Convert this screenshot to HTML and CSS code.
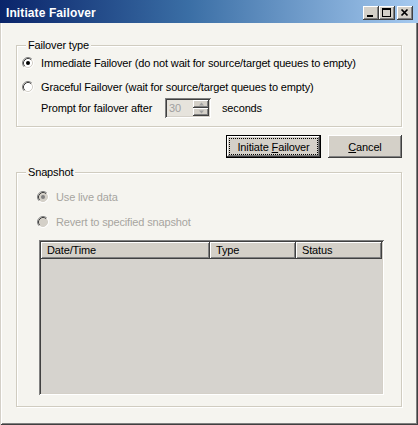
FILE: index.html
```html
<!DOCTYPE html>
<html>
<head>
<meta charset="utf-8">
<link rel="stylesheet" href="styles.css">
</head>
<body>
<div class="window">
  <div class="titlebar">
    <span class="title">Initiate Failover</span>
    <div class="tbtns">
      <span class="tbtn"><svg width="16" height="14" viewBox="0 0 16 14"><rect x="4" y="9" width="6" height="2" fill="#000"/></svg></span>
      <span class="tbtn"><svg width="16" height="14" viewBox="0 0 16 14"><rect x="3.5" y="2.5" width="8" height="8" fill="none" stroke="#000"/><rect x="3" y="2" width="9" height="2" fill="#000"/></svg></span>
      <span class="tbtn close"><svg width="16" height="14" viewBox="0 0 16 14"><path d="M4.5 3.5 L10.5 9.5 M10.5 3.5 L4.5 9.5" stroke="#000" stroke-width="1.7" fill="none"/></svg></span>
    </div>
  </div>
  <div class="client">
    <fieldset class="group g1">
      <legend>Failover type</legend>
      <div class="gbody">
        <div class="row r1">
          <svg class="radio" width="12" height="12" viewBox="0 0 12 12"><circle cx="6" cy="6" r="4.5" fill="#fff"/><path d="M2.11 9.89 A5.5 5.5 0 0 1 9.89 2.11" stroke="#808080" fill="none"/><path d="M9.89 2.11 A5.5 5.5 0 0 1 2.11 9.89" stroke="#fff" fill="none"/><path d="M2.82 9.18 A4.5 4.5 0 0 1 9.18 2.82" stroke="#404040" fill="none"/><path d="M9.18 2.82 A4.5 4.5 0 0 1 2.82 9.18" stroke="#d4d0c8" fill="none"/><circle cx="6" cy="6" r="2" fill="#000"/></svg>
          <span>Immediate Failover (do not wait for source/target queues to empty)</span>
        </div>
        <div class="row r2">
          <svg class="radio" width="12" height="12" viewBox="0 0 12 12"><circle cx="6" cy="6" r="4.5" fill="#fff"/><path d="M2.11 9.89 A5.5 5.5 0 0 1 9.89 2.11" stroke="#808080" fill="none"/><path d="M9.89 2.11 A5.5 5.5 0 0 1 2.11 9.89" stroke="#fff" fill="none"/><path d="M2.82 9.18 A4.5 4.5 0 0 1 9.18 2.82" stroke="#404040" fill="none"/><path d="M9.18 2.82 A4.5 4.5 0 0 1 2.82 9.18" stroke="#d4d0c8" fill="none"/></svg>
          <span>Graceful Failover (wait for source/target queues to empty)</span>
        </div>
        <div class="row prompt">
          <span class="plabel">Prompt for failover after</span>
          <div class="spin">
            <span class="spin-val">30</span>
            <span class="spin-btns">
              <span class="sb"><svg width="7" height="4" viewBox="0 0 7 4"><path d="M3.5 0.5 L6 3.5 L1 3.5 Z" fill="#a0a0a0"/></svg></span>
              <span class="sb"><svg width="7" height="4" viewBox="0 0 7 4"><path d="M1 0.5 L6 0.5 L3.5 3.5 Z" fill="#a0a0a0"/></svg></span>
            </span>
          </div>
          <span class="secs">seconds</span>
        </div>
      </div>
    </fieldset>

    <div class="buttons">
      <button class="btn default"><span class="focus"><span class="lbl">Initiate <u>F</u>ailover</span></span></button>
      <button class="btn cancel"><span class="focus nofocus"><span class="lbl"><u>C</u>ancel</span></span></button>
    </div>

    <fieldset class="group g2">
      <legend>Snapshot</legend>
      <div class="gbody gb2">
        <div class="row r1 disabled">
          <svg class="radio" width="12" height="12" viewBox="0 0 12 12"><circle cx="6" cy="6" r="4.5" fill="#d4d0c8"/><path d="M2.11 9.89 A5.5 5.5 0 0 1 9.89 2.11" stroke="#808080" fill="none"/><path d="M9.89 2.11 A5.5 5.5 0 0 1 2.11 9.89" stroke="#fff" fill="none"/><path d="M2.82 9.18 A4.5 4.5 0 0 1 9.18 2.82" stroke="#404040" fill="none"/><path d="M9.18 2.82 A4.5 4.5 0 0 1 2.82 9.18" stroke="#d4d0c8" fill="none"/><circle cx="6" cy="6" r="2" fill="#808080"/></svg>
          <span>Use live data</span>
        </div>
        <div class="row r2b disabled">
          <svg class="radio" width="12" height="12" viewBox="0 0 12 12"><circle cx="6" cy="6" r="4.5" fill="#d4d0c8"/><path d="M2.11 9.89 A5.5 5.5 0 0 1 9.89 2.11" stroke="#808080" fill="none"/><path d="M9.89 2.11 A5.5 5.5 0 0 1 2.11 9.89" stroke="#fff" fill="none"/><path d="M2.82 9.18 A4.5 4.5 0 0 1 9.18 2.82" stroke="#404040" fill="none"/><path d="M9.18 2.82 A4.5 4.5 0 0 1 2.82 9.18" stroke="#d4d0c8" fill="none"/></svg>
          <span>Revert to specified snapshot</span>
        </div>
        <div class="list">
          <div class="lhead">
            <div class="col c1">Date/Time</div>
            <div class="col c2">Type</div>
            <div class="col c3">Status</div>
          </div>
        </div>
      </div>
    </fieldset>
  </div>
</div>
</body>
</html>
```

FILE: styles.css
```css
html, body {
  margin: 0;
  padding: 0;
  background: #f5f4ef;
}

.window {
  width: 418px;
  height: 425px;
  box-sizing: border-box;
  display: flex;
  flex-direction: column;
  background: #f5f4ef;
  font-family: "Liberation Sans", Arial, sans-serif;
  font-size: 11px;
  letter-spacing: -0.15px;
  color: #000;
  box-shadow: inset 1px 1px 0 #d4d0c8, inset -1px -1px 0 #404040,
              inset 2px 2px 0 #ffffff, inset -2px -2px 0 #808080;
}

.titlebar {
  height: 23px;
  box-sizing: border-box;
  padding: 2px 5px 0 6px;
  display: flex;
  align-items: center;
  background: linear-gradient(to right, #0a246a 0%, #3a6ea5 45%, #a6caf0 100%);
}

.title {
  flex: 1;
  color: #fff;
  font-weight: bold;
  font-size: 12px;
  letter-spacing: 0.1px;
}

.tbtns {
  display: flex;
}

.tbtn {
  width: 16px;
  height: 14px;
  background: #d4d0c8;
  box-shadow: inset -1px -1px 0 #404040, inset 1px 1px 0 #ffffff, inset -2px -2px 0 #808080;
}

.tbtn svg {
  display: block;
}

.tbtn.close {
  margin-left: 2px;
}

.client {
  flex: 1;
  padding: 15px 12px 0 16px;
  display: flex;
  flex-direction: column;
}

.group {
  margin: 0;
  padding: 0;
  width: 386px;
  box-sizing: border-box;
  border: 1px solid #d0ccc0;
  box-shadow: inset 1px 1px 0 #ffffff, 1px 1px 0 #ffffff;
}

.group legend {
  margin-left: 9px;
  padding: 0 2px;
  height: 14px;
  line-height: 14px;
  background: #f5f4ef;
}

.gbody {
  padding: 2px 0 8px 5px;
  display: flex;
  flex-direction: column;
}

.row {
  display: flex;
  align-items: center;
  height: 18px;
}

.row .radio {
  flex: none;
  margin-right: 7px;
}

.r2 {
  margin-top: 6px;
}

.prompt {
  margin-top: 2px;
  height: 20px;
  padding-left: 19px;
}

.plabel {
  width: 124px;
}

.spin {
  width: 46px;
  height: 20px;
  box-sizing: border-box;
  display: flex;
  padding: 2px;
  background: #e6e3dc;
  box-shadow: inset 1px 1px 0 #808080, inset -1px -1px 0 #ffffff,
              inset 2px 2px 0 #404040, inset -2px -2px 0 #d4d0c8;
}

.spin-val {
  flex: 1;
  padding-left: 2px;
  line-height: 16px;
  color: #a0a0a0;
}

.spin-btns {
  width: 16px;
  display: flex;
  flex-direction: column;
}

.sb {
  flex: 1;
  display: flex;
  align-items: center;
  justify-content: center;
  background: #d4d0c8;
  box-shadow: inset -1px -1px 0 #404040, inset 1px 1px 0 #ffffff, inset -2px -2px 0 #808080;
}

.sb svg {
  display: block;
}

.secs {
  margin-left: 11px;
}

.buttons {
  margin-top: 8px;
  width: 386px;
  display: flex;
  justify-content: flex-end;
  gap: 7px;
}

.btn {
  height: 23px;
  padding: 3px 3px;
  box-sizing: border-box;
  display: flex;
  margin: 0;
  border: none;
  background: #d4d0c8;
  font-family: "Liberation Sans", Arial, sans-serif;
  font-size: 11px;
  letter-spacing: -0.15px;
  color: #000;
  box-shadow: inset -1px -1px 0 #404040, inset 1px 1px 0 #ffffff, inset -2px -2px 0 #808080;
}

.btn.default {
  width: 95px;
  border: 1px solid #000;
  padding: 2px 2px;
}

.btn.cancel {
  width: 74px;
}

.focus {
  flex: 1;
  display: flex;
  align-items: center;
  justify-content: center;
  border: 1px dotted #000;
}

.lbl {
  white-space: pre;
}

.focus.nofocus {
  border-color: transparent;
}

.g2 {
  margin-top: 7px;
}

.gb2 {
  padding: 9px 0 11px 20px;
}

.disabled {
  color: #a7a59f;
}

.r2b {
  margin-top: 7px;
}

.list {
  margin-top: 9px;
  margin-left: 2px;
  width: 345px;
  height: 155px;
  box-sizing: border-box;
  padding: 2px;
  background: #d6d3ce;
  box-shadow: inset 1px 1px 0 #808080, inset -1px -1px 0 #ffffff,
              inset 2px 2px 0 #404040, inset -2px -2px 0 #d4d0c8;
}

.lhead {
  display: flex;
  height: 17px;
}

.col {
  box-sizing: border-box;
  height: 17px;
  line-height: 16px;
  padding-left: 6px;
  background: #d4d0c8;
  box-shadow: inset -1px -1px 0 #404040, inset 1px 1px 0 #ffffff, inset -2px -2px 0 #808080;
}

.c1 { width: 169px; }
.c2 { width: 86px; }
.c3 { width: 86px; }
```
